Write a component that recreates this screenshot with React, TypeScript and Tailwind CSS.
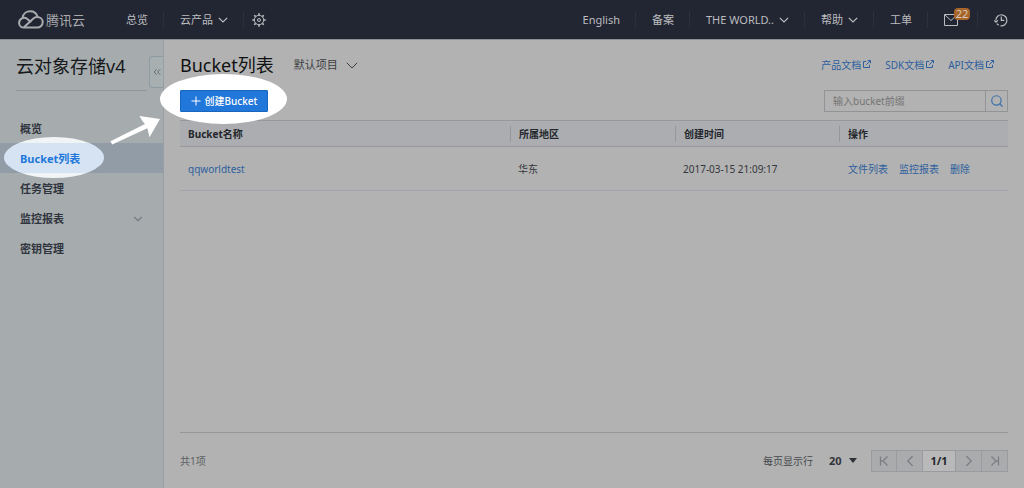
import type { ReactNode } from "react"
import { ChevronDown, ChevronLeft, ChevronRight, ChevronsLeft, Search } from "lucide-react"

const menu = [
  { label: "概览" },
  { label: "Bucket列表", active: true },
  { label: "任务管理" },
  { label: "监控报表", expandable: true },
  { label: "密钥管理" },
]

const docs = ["产品文档", "SDK文档", "API文档"]

const columns = [
  { title: "所属地区", width: "w-[165px]" },
  { title: "创建时间", width: "w-[164px]" },
  { title: "操作", width: "w-[169px]" },
]

const buckets = [{ name: "qqworldtest", region: "华东", created: "2017-03-15 21:09:17" }]

function NavItem({ children, last }: { children: ReactNode; last?: boolean }) {
  return (
    <li className="flex items-center">
      <div className="flex items-center px-4">{children}</div>
      {!last && <span className="-ml-px h-4 border-l border-dotted border-[#343945]" />}
    </li>
  )
}

function NavLink({ label, arrow }: { label: string; arrow?: boolean }) {
  return (
    <a href="#" className="flex items-center gap-[5px] whitespace-nowrap">
      {label}
      {arrow && (
        <svg viewBox="0 0 10 6" className="h-1.5 w-2.5" fill="none" stroke="currentColor" strokeWidth="1.2">
          <path d="M0.8 0.8 5 5 9.2 0.8" />
        </svg>
      )}
    </a>
  )
}

function CloudLogo() {
  return (
    <svg viewBox="0 0 26 19" className="h-[19px] w-[26px]" fill="none" stroke="currentColor" strokeWidth="2">
      <path d="M4.6 7.600C5.200 3.800 8.400 1.300 12.200 1.300c3.500 0 6.200 2 7.200 5.200" />
      <path d="M13.200 12.300 9.300 9C5.800 6.300 1.100 8.700 1.100 12.900c0 2.600 2.100 4.700 4.800 4.700h13.300c3.100 0 5.500-2.500 5.500-5.400s-2.400-5.200-5.500-5.200c-1.700 0-2.900.6-4.100 1.700L6.200 17" />
    </svg>
  )
}

function GearIcon() {
  return (
    <svg viewBox="0 0 14 14" className="h-3.5 w-3.5" fill="none" stroke="currentColor">
      <circle cx="7" cy="7" r="4.7" />
      <circle cx="7" cy="7" r="1.5" />
      <path
        strokeWidth="1.6"
        d="M7 .3v2M7 11.700v2M.3 7h2M11.700 7h2M2.260 2.260l1.400 1.400M10.340 10.340l1.400 1.400M11.740 2.260l-1.400 1.400M3.660 10.340l-1.400 1.400"
      />
    </svg>
  )
}

function HistoryIcon() {
  return (
    <svg viewBox="0 0 14 14" className="h-3.5 w-3.5" fill="none" stroke="currentColor" strokeWidth="1.2">
      <path d="M1.900 7.200A5.500 5.500 0 1 1 6.500 12.700" />
      <path d="M.2 7.400 2 9.200 3.900 7.300M7.300 3.600v3.800h3M2.800 10.600l1.800 1.700" />
    </svg>
  )
}

function ExternalIcon() {
  return (
    <svg viewBox="0 0 8 8" className="mb-0.5 h-2 w-2" fill="none" stroke="currentColor">
      <path d="M3.200 1.500H.5v6h6V4.800M3.200 4.800 7.200.8M4.700.5h2.800v2.800" />
    </svg>
  )
}

export default function App() {
  return (
    <div className="flex min-h-screen flex-col bg-[#b2b2b2] font-['Noto_Sans','Noto_Sans_CJK_SC',sans-serif] text-[10px] leading-4 text-[#33363c]">
      <header className="flex h-10 items-center justify-between border-b border-[#8c8f93] bg-[#222632] text-[11px] text-[#bcbdc0]">
        <div className="flex items-center">
          <a href="#" className="flex items-center gap-0.5 pl-[18px] text-[13px] text-[#aaabae]">
            <CloudLogo />
            腾讯云
          </a>
          <ul className="ml-[25px] flex items-center">
            <NavItem>
              <NavLink label="总览" />
            </NavItem>
            <NavItem>
              <NavLink label="云产品" arrow />
            </NavItem>
            <li className="flex items-center pl-2">
              <button aria-label="设置">
                <GearIcon />
              </button>
            </li>
          </ul>
        </div>
        <ul className="flex items-center">
          <NavItem>
            <NavLink label="English" />
          </NavItem>
          <NavItem>
            <NavLink label="备案" />
          </NavItem>
          <NavItem>
            <NavLink label="THE WORLD.." arrow />
          </NavItem>
          <NavItem>
            <NavLink label="帮助" arrow />
          </NavItem>
          <NavItem>
            <NavLink label="工单" />
          </NavItem>
          <NavItem>
            <a href="#" className="relative mr-1 block">
              <svg viewBox="0 0 14 12" className="h-3 w-3.5" fill="none" stroke="currentColor">
                <path d="M.5.5h13v11H.5zM.8.8 7 6.500 13.200.8" />
              </svg>
              <span className="absolute -top-1.5 left-2.5 flex h-3 w-4 items-center justify-center rounded-sm bg-[#a8652a] text-[#d6c9bb]">
                22
              </span>
            </a>
          </NavItem>
          <NavItem last>
            <button aria-label="历史记录">
              <HistoryIcon />
            </button>
          </NavItem>
        </ul>
      </header>

      <div className="flex flex-1">
        <aside className="relative w-[164px] shrink-0 border-r border-[#949fa7] bg-[#a6acad]">
          <h1 className="mx-4 h-[51px] border-b border-[#8f9696] pt-3 text-[18px] leading-7 whitespace-nowrap text-[#17191c]">
            云对象存储v4
          </h1>
          <button
            aria-label="收起菜单"
            className="absolute top-4 right-0 flex h-8 w-3.5 items-center justify-center rounded-l-sm border border-r-0 border-[#8f9ba3] bg-[#a8afb1] text-[#656c71]"
          >
            <ChevronsLeft className="h-3 w-3" strokeWidth={2} />
          </button>

          <nav className="relative mt-[22px] text-[11px] font-bold text-[#30343e]">
            {/* spotlight behind the active entry */}
            <span className="absolute top-6 left-1 h-[41px] w-[100px] rounded-[50%] bg-[linear-gradient(#f0f4f5_6px,#d5e3f3_6px,#d5e3f3_36px,#f0f4f5_36px)]" />
            <ul>
              {menu.map((item) => (
                <li key={item.label} className={item.active ? "bg-[#929ca7]" : ""}>
                  <a
                    href="#"
                    className={`flex h-[30px] items-center justify-between pt-0.5 pr-[18px] pl-5 ${
                      item.active ? "text-[#2277da]" : ""
                    }`}
                  >
                    <span className="relative">{item.label}</span>
                    {item.expandable && <ChevronDown className="h-3.5 w-3.5 text-[#757b80]" strokeWidth={2} />}
                  </a>
                </li>
              ))}
            </ul>
            <svg viewBox="0 0 50 30" className="absolute top-0.5 left-[110px] z-10 h-[30px] w-[50px]" fill="#fff">
              <path d="M50 4 29.500 1Q32 6 35 9L.5 26.300 2.200 29.500 37.300 13.200Q38.500 17.500 39.500 22.300Z" />
            </svg>
          </nav>
        </aside>

        <main className="flex min-w-0 flex-1 flex-col px-4">
          <div className="flex h-[50px] items-center justify-between">
            <div className="flex items-center gap-5">
              <h2 className="text-[18px] leading-7 text-[#101113]">Bucket列表</h2>
              <button className="flex items-center gap-2 text-[11px] text-[#3c3f44]">
                默认项目
                <svg viewBox="0 0 12 7" className="h-[7px] w-3" fill="none" stroke="currentColor">
                  <path d="M.8.8 6 6 11.200.8" />
                </svg>
              </button>
            </div>
            <div className="flex gap-3.5 pr-3.5 text-[#2d5f9e]">
              {docs.map((doc) => (
                <a key={doc} href="#" className="flex items-center gap-0.5">
                  {doc}
                  <ExternalIcon />
                </a>
              ))}
            </div>
          </div>

          <div className="flex items-center justify-between">
            <div className="relative">
              <span className="absolute -top-4 -left-5 h-[50px] w-[127px] rounded-[50%] bg-white" />
              <button className="relative flex h-[22px] w-[88px] items-center justify-center gap-1 rounded-[1px] border border-[#1a66bd] bg-[#2277da] font-medium text-white">
                <svg viewBox="0 0 10 10" className="h-2.5 w-2.5" stroke="currentColor">
                  <path d="M5 .5v9M.5 5h9" />
                </svg>
                创建Bucket
              </button>
            </div>
            <form className="flex h-[22px] w-[184px] border border-[#919396]">
              <input
                type="text"
                aria-label="输入bucket前缀"
                placeholder="输入bucket前缀"
                className="min-w-0 flex-1 px-2 outline-none placeholder:text-[#747474]"
              />
              <button
                type="button"
                aria-label="搜索"
                className="flex w-[22px] items-center justify-center border-l border-[#919396] text-[#3b70ac]"
              >
                <Search className="h-3.5 w-3.5" strokeWidth={2} />
              </button>
            </form>
          </div>

          <div className="mt-2 flex-1 border-b border-[#979797]">
            <table className="w-full table-fixed text-left">
              <thead className="border-y border-[#96989c] bg-[#abadb0] text-[#24272c]">
                <tr className="h-[26px]">
                  <th className="px-2">Bucket名称</th>
                  {columns.map((column) => (
                    <th key={column.title} className={column.width}>
                      <div className="border-l border-[#95979b] pl-2">{column.title}</div>
                    </th>
                  ))}
                </tr>
              </thead>
              <tbody>
                {buckets.map((bucket) => (
                  <tr key={bucket.name} className="h-11 border-b border-[#a4a5ac]">
                    <td className="px-2">
                      <a href="#" className="text-[#2d5f9e]">
                        {bucket.name}
                      </a>
                    </td>
                    <td className="pl-2">{bucket.region}</td>
                    <td className="pl-2">{bucket.created}</td>
                    <td className="pl-[9px] text-[#2d5f9e]">
                      <div className="flex gap-[11px]">
                        <a href="#">文件列表</a>
                        <a href="#">监控报表</a>
                        <a href="#">删除</a>
                      </div>
                    </td>
                  </tr>
                ))}
              </tbody>
            </table>
          </div>

          <footer className="flex h-[55px] items-center justify-between">
            <span className="text-[#5d5f62]">共1项</span>
            <div className="flex items-center">
              <label htmlFor="page-size" className="text-[#45484d]">
                每页显示行
              </label>
              <div className="relative ml-4 flex items-center">
                <select id="page-size" className="w-7 appearance-none text-[11px] font-bold" defaultValue="20">
                  <option>20</option>
                  <option>50</option>
                </select>
                <span className="pointer-events-none absolute right-0 border-x-4 border-t-[5px] border-x-transparent border-t-[#2c2f34]" />
              </div>
              <div className="ml-3.5 flex h-[22px] divide-x divide-[#999ba0] border border-[#999ba0] bg-[#aaabad] text-[#7b7e83]">
                <button aria-label="第一页" className="flex w-[25px] items-center justify-center">
                  <svg viewBox="0 0 10 10" className="h-2.5 w-2.5" fill="none" stroke="currentColor" strokeWidth="1.3">
                    <path d="M1.500.5v9M8.500.5 4 5l4.500 4.500M1.500 5H4" />
                  </svg>
                </button>
                <button aria-label="上一页" className="flex w-[26px] items-center justify-center">
                  <ChevronLeft className="h-[18px] w-[18px]" strokeWidth={1.75} />
                </button>
                <input
                  aria-label="页码"
                  defaultValue="1/1"
                  className="w-[33px] bg-[#b9b9b9] text-center text-[11px] font-bold text-[#24272c]"
                />
                <button aria-label="下一页" className="flex w-[26px] items-center justify-center">
                  <ChevronRight className="h-[18px] w-[18px]" strokeWidth={1.75} />
                </button>
                <button aria-label="最后一页" className="flex w-[25px] items-center justify-center">
                  <svg viewBox="0 0 10 10" className="h-2.5 w-2.5" fill="none" stroke="currentColor" strokeWidth="1.3">
                    <path d="M8.500.5v9M1.500.5 6 5 1.500 9.500M6 5h2.500" />
                  </svg>
                </button>
              </div>
            </div>
          </footer>
        </main>
      </div>
    </div>
  )
}
